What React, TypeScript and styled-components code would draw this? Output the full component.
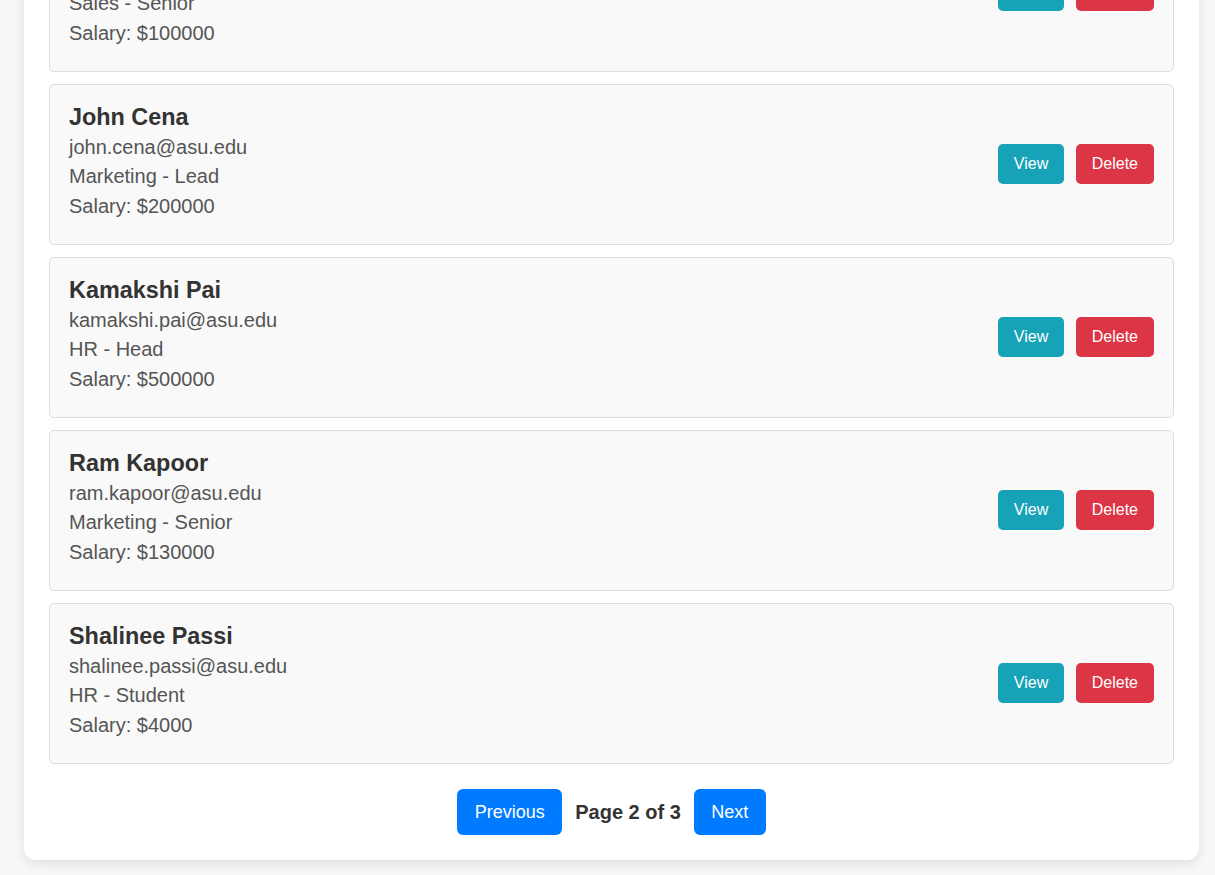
import React from "react";
import styled, { createGlobalStyle } from "styled-components";

const GlobalStyle = createGlobalStyle`
  html, body {
    margin: 0;
    padding: 0;
    background: #f7f8fa;
    font-family: "Liberation Sans", Arial, Helvetica, sans-serif;
  }
  * { box-sizing: border-box; }
`;

const Viewport = styled.div`
  height: 100vh;
  overflow: hidden;
  display: flex;
  flex-direction: column;
  justify-content: flex-end;
`;

const Panel = styled.div`
  flex-shrink: 0;
  width: 1175px;
  margin: 0 16px 15px 24px;
  padding: 25px;
  background: #ffffff;
  border-radius: 12px;
  box-shadow: 0 4px 12px rgba(0, 0, 0, 0.1);
`;

const Title = styled.h2`
  margin: 0 0 20px;
  font-size: 28px;
  color: #333;
  text-align: center;
`;

const List = styled.div`
  display: flex;
  flex-direction: column;
  gap: 12px;
`;

const Card = styled.div`
  display: flex;
  align-items: center;
  justify-content: space-between;
  height: 161px;
  padding: 20px 19px 23px 19px;
  background: #f9f9f9;
  border: 1px solid #ddd;
  border-radius: 5px;
`;

const Info = styled.div`
  display: flex;
  flex-direction: column;
`;

const Name = styled.h3`
  margin: 0 0 4px;
  font-size: 23.4px;
  line-height: 24px;
  font-weight: bold;
  color: #333;
`;

const Detail = styled.p`
  margin: 0;
  font-size: 20px;
  line-height: 29.3px;
  color: #555;
`;

const Actions = styled.div`
  display: flex;
  gap: 12px;
  margin-top: 2px;
`;

const ActionButton = styled.button<{ $variant: "view" | "delete" }>`
  height: 40px;
  padding: 0 ${(p) => (p.$variant === "view" ? "15.5px" : "16px")};
  border: none;
  border-radius: 5px;
  font-family: inherit;
  font-size: 16px;
  color: #fff;
  cursor: pointer;
  background: ${(p) => (p.$variant === "view" ? "#17a2b8" : "#dc3545")};
`;

const Pagination = styled.div`
  display: flex;
  justify-content: center;
  align-items: center;
  gap: 13px;
  margin-top: 25px;
`;

const PageButton = styled.button`
  height: 46px;
  padding: 0 17.5px;
  border: none;
  border-radius: 6px;
  background: #007bff;
  color: #fff;
  font-family: inherit;
  font-size: 18px;
  cursor: pointer;
`;

const PageLabel = styled.span`
  font-size: 20px;
  font-weight: bold;
  color: #333;
`;

type Employee = {
  name: string;
  email: string;
  dept: string;
  role: string;
  salary: number;
};

const employees: Employee[] = [
  { name: "Arjun Mehta", email: "arjun.mehta@asu.edu", dept: "Sales", role: "Senior", salary: 100000 },
  { name: "John Cena", email: "john.cena@asu.edu", dept: "Marketing", role: "Lead", salary: 200000 },
  { name: "Kamakshi Pai", email: "kamakshi.pai@asu.edu", dept: "HR", role: "Head", salary: 500000 },
  { name: "Ram Kapoor", email: "ram.kapoor@asu.edu", dept: "Marketing", role: "Senior", salary: 130000 },
  { name: "Shalinee Passi", email: "shalinee.passi@asu.edu", dept: "HR", role: "Student", salary: 4000 },
];

export default function App() {
  return (
    <>
      <GlobalStyle />
      <Viewport>
        <Panel>
          <Title>Employee List</Title>
          <List>
            {employees.map((e) => (
              <Card key={e.email}>
                <Info>
                  <Name>{e.name}</Name>
                  <Detail>{e.email}</Detail>
                  <Detail>
                    {e.dept} - {e.role}
                  </Detail>
                  <Detail>Salary: ${e.salary}</Detail>
                </Info>
                <Actions>
                  <ActionButton $variant="view">View</ActionButton>
                  <ActionButton $variant="delete">Delete</ActionButton>
                </Actions>
              </Card>
            ))}
          </List>
          <Pagination>
            <PageButton>Previous</PageButton>
            <PageLabel>Page 2 of 3</PageLabel>
            <PageButton>Next</PageButton>
          </Pagination>
        </Panel>
      </Viewport>
    </>
  );
}
